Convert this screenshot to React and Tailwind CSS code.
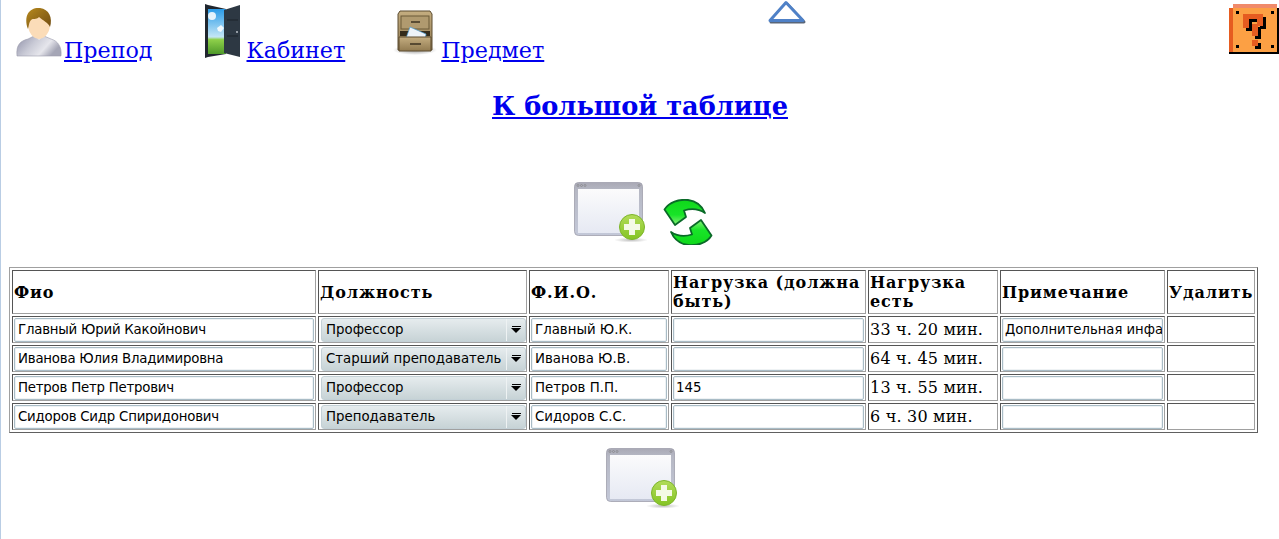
const serif = { fontFamily: '"DejaVu Serif", serif' };
const sans = { fontFamily: '"DejaVu Sans", sans-serif' };

const rows = [
  { name: "Главный Юрий Какойнович", post: "Профессор", short: "Главный Ю.К.", load: "", real: "33 ч. 20 мин.", note: "Дополнительная инфа" },
  { name: "Иванова Юлия Владимировна", post: "Старший преподаватель", short: "Иванова Ю.В.", load: "", real: "64 ч. 45 мин.", note: "" },
  { name: "Петров Петр Петрович", post: "Профессор", short: "Петров П.П.", load: "145", real: "13 ч. 55 мин.", note: "" },
  { name: "Сидоров Сидр Спиридонович", post: "Преподаватель", short: "Сидоров С.С.", load: "", real: "6 ч. 30 мин.", note: "" },
];

const heads = [
  ["Фио", "w-[304px]"],
  ["Должность", "w-[209px]"],
  ["Ф.И.О.", "w-[140px]"],
  ["Нагрузка (должна быть)", "w-[195px]"],
  ["Нагрузка есть", "w-[130px]"],
  ["Примечание", "w-[165px]"],
  ["Удалить", "w-[88px]"],
];

function PersonIcon() {
  return (
    <svg width="46" height="52" viewBox="0 0 46 52" className="shrink-0">
      <defs>
        <linearGradient id="shirt" x1="0" y1="0" x2="1" y2="0.4">
          <stop offset="0" stopColor="#8f90a8" />
          <stop offset="0.45" stopColor="#c9cad6" />
          <stop offset="0.75" stopColor="#e6e6ec" />
          <stop offset="1" stopColor="#a5a6b6" />
        </linearGradient>
        <linearGradient id="hair" x1="0" y1="0" x2="1" y2="1">
          <stop offset="0" stopColor="#b88a1e" />
          <stop offset="1" stopColor="#6e4a12" />
        </linearGradient>
      </defs>
      <path d="M1 49 C0 38 4 34 12 32 L18 29 L28 29 L35 32 C42 34 46 40 45 49 Z" fill="url(#shirt)" stroke="#9a9bab" strokeWidth="0.6" />
      <path d="M19 28 L23 33 L28 28 L27 25 L19 25 Z" fill="#f6efe8" />
      <ellipse cx="23" cy="17" rx="11" ry="15" fill="#fbdcb8" />
      <path d="M12 22 C7 8 14 0 24 1 C33 2 37 11 34 20 C32 15 27 14 23 10 C20 13 17 11 15 13 C13 15 13 18 12 22 Z" fill="url(#hair)" />
    </svg>
  );
}

function DoorIcon() {
  return (
    <svg width="37" height="54" viewBox="0 0 37 54" className="shrink-0">
      <defs>
        <linearGradient id="sky" x1="0" y1="0" x2="0" y2="1">
          <stop offset="0" stopColor="#2a9be8" />
          <stop offset="0.62" stopColor="#c4e6f6" />
          <stop offset="0.68" stopColor="#8ed04a" />
          <stop offset="1" stopColor="#4f9a2a" />
        </linearGradient>
      </defs>
      <path d="M0 0 L3 1 L21 5 L21 50 L3 53 L0 54 Z" fill="#20262e" />
      <rect x="3" y="5" width="18" height="45" fill="url(#sky)" />
      <circle cx="7" cy="12" r="4" fill="#ffffff" opacity="0.85" />
      <path d="M12 24 l4 -3 l3 3 l-3 4 l-3 -1 Z" fill="#ffffff" opacity="0.85" />
      <path d="M19 6 L35 1 L35 53 L19 49 Z" fill="#2d3843" />
      <path d="M22 16 H33 M22 32 H33" stroke="#1c232b" strokeWidth="1" />
      <circle cx="32" cy="28" r="0.9" fill="#c7ccd2" />
    </svg>
  );
}

function CabinetIcon() {
  return (
    <svg width="44" height="46" viewBox="0 0 44 46" className="shrink-0">
      <defs>
        <linearGradient id="wood" x1="0" y1="0" x2="0" y2="1">
          <stop offset="0" stopColor="#c4ad80" />
          <stop offset="1" stopColor="#917a50" />
        </linearGradient>
        <radialGradient id="floor">
          <stop offset="0" stopColor="#555" stopOpacity="0.6" />
          <stop offset="1" stopColor="#555" stopOpacity="0" />
        </radialGradient>
      </defs>
      <ellipse cx="22" cy="40" rx="22" ry="5" fill="url(#floor)" />
      <path d="M7 1 H37 L39 4 V40 H5 V4 Z" fill="url(#wood)" stroke="#5d4d30" />
      <rect x="8" y="6" width="28" height="13" fill="#b09a6f" stroke="#6b5a38" />
      <path d="M18 12 H27" stroke="#3c3220" strokeWidth="1.5" />
      <path d="M7 21 H37 V26 H7 Z" fill="#352c1b" />
      <path d="M12 31 L17 17 L33 24 L32 31 Z" fill="#eef3f8" stroke="#4b9bd0" strokeWidth="0.7" />
      <path d="M6 27 H38 V41 H6 Z" fill="url(#wood)" stroke="#5d4d30" />
      <path d="M17 34 H28" stroke="#3c3220" strokeWidth="1.5" />
    </svg>
  );
}

function TriangleIcon() {
  return (
    <svg width="42" height="26" viewBox="0 0 42 26" className="ml-[222px] shrink-0">
      <path d="M20 2.500 L37 20.500 H4 Z" fill="none" stroke="#2f4058" strokeWidth="3" strokeLinejoin="round" opacity="0.8" transform="translate(1 1.500)" />
      <path d="M20 2.500 L37 20.500 H4 Z" fill="#fff" stroke="#4f81c7" strokeWidth="3" strokeLinejoin="round" />
    </svg>
  );
}

function QuestionIcon() {
  const mark = "M14 10 H34 V22 H29 V32 H23 V20 H28 V15 H20 V24 H14 Z";
  return (
    <svg width="50" height="50" viewBox="0 0 50 50" shapeRendering="crispEdges" className="ml-auto mt-[4px] shrink-0">
      <rect x="4" y="0" width="44" height="4" fill="#f08a6a" />
      <rect x="0" y="4" width="50" height="46" fill="#000" />
      <rect x="0" y="4" width="4" height="44" fill="#e65c20" />
      <rect x="4" y="4" width="44" height="44" fill="#fca044" />
      <rect x="7" y="7" width="3" height="3" fill="#000" />
      <rect x="42" y="7" width="3" height="3" fill="#000" />
      <rect x="7" y="41" width="3" height="3" fill="#000" />
      <rect x="42" y="41" width="3" height="3" fill="#000" />
      <path d={mark} fill="#000" transform="translate(3 3)" />
      <path d={mark} fill="#e65c20" />
      <rect x="26" y="39" width="6" height="6" fill="#000" />
      <rect x="23" y="36" width="6" height="6" fill="#e65c20" />
    </svg>
  );
}

function AddWindowIcon({ id, className = "" }) {
  return (
    <svg width="76" height="62" viewBox="0 0 76 62" className={`shrink-0 ${className}`}>
      <defs>
        <linearGradient id={`frame${id}`} x1="0" y1="0" x2="0" y2="1">
          <stop offset="0" stopColor="#a9a9b5" />
          <stop offset="0.15" stopColor="#b6b8c4" />
          <stop offset="1" stopColor="#c3c8d8" />
        </linearGradient>
        <linearGradient id={`pane${id}`} x1="0" y1="0" x2="0" y2="1">
          <stop offset="0" stopColor="#fbfbfc" />
          <stop offset="1" stopColor="#e6e9f3" />
        </linearGradient>
        <linearGradient id={`ball${id}`} x1="0" y1="0" x2="0" y2="1">
          <stop offset="0" stopColor="#b2dc5a" />
          <stop offset="1" stopColor="#84c424" />
        </linearGradient>
        <radialGradient id={`shade${id}`}>
          <stop offset="0" stopColor="#888" stopOpacity="0.55" />
          <stop offset="1" stopColor="#888" stopOpacity="0" />
        </radialGradient>
      </defs>
      <ellipse cx="58" cy="59" rx="17" ry="2.500" fill={`url(#shade${id})`} />
      <rect x="1.500" y="1.500" width="68" height="53" rx="4" fill={`url(#frame${id})`} stroke="#a0a0ac" strokeWidth="0.8" />
      <rect x="5" y="8" width="61" height="44" fill={`url(#pane${id})`} />
      <circle cx="5" cy="4.500" r="1" fill="none" stroke="#777" strokeWidth="0.5" />
      <circle cx="8.500" cy="4.500" r="1" fill="none" stroke="#777" strokeWidth="0.5" />
      <circle cx="12" cy="4.500" r="1" fill="none" stroke="#777" strokeWidth="0.5" />
      <circle cx="66" cy="4.500" r="1" fill="none" stroke="#777" strokeWidth="0.5" />
      <circle cx="59" cy="46" r="12.500" fill={`url(#ball${id})`} stroke="#7db52a" strokeWidth="1" />
      <path d="M56 38 H62 V43 H67 V49 H62 V54 H56 V49 H51 V43 H56 Z" fill="#f4fae6" />
    </svg>
  );
}

function RefreshIcon() {
  const arc = "M1.500 10.500 C6 3 16 0 25 1 C33 2 39 7 42 14 C36 10 29 9 21 11.500 L23 18 L12 26 Z";
  return (
    <svg width="50" height="46" viewBox="0 0 50 46" className="shrink-0">
      <defs>
        <linearGradient id="arrow" x1="0" y1="0" x2="0" y2="1">
          <stop offset="0" stopColor="#0fd81a" />
          <stop offset="0.6" stopColor="#18e428" />
          <stop offset="1" stopColor="#8af27a" />
        </linearGradient>
      </defs>
      <path d={arc} fill="url(#arrow)" stroke="#0a6a28" strokeWidth="1.800" strokeLinejoin="round" />
      <path d={arc} fill="url(#arrow)" stroke="#0a6a28" strokeWidth="1.800" strokeLinejoin="round" transform="rotate(180 25 23.500)" />
    </svg>
  );
}

function Field({ value, className = "text-[13.33px] pl-[3px]" }) {
  return (
    <div className={`h-[24px] w-full overflow-hidden whitespace-nowrap rounded-[2px] border border-[#a9bcc6] bg-white leading-[22px] text-black shadow-[inset_0_0_0_1px_#eef2f4] ${className}`} style={sans}>
      {value}
    </div>
  );
}

function SelectBox({ value }) {
  return (
    <div className="ml-[1px] flex h-[24px] w-[205px] items-stretch overflow-hidden rounded-[3px] border border-[#c3d0d6] bg-gradient-to-b from-[#e6ecee] to-[#c7d3d6] text-[13.33px] leading-[22px] text-black" style={sans}>
      <span className="flex-1 overflow-hidden whitespace-nowrap pl-[4px]">{value}</span>
      <span className="flex w-[19px] flex-col items-center justify-center border-l border-[#eef2f3]">
        <span className="mb-[1px] h-[1px] w-[9px] bg-black" />
        <span className="h-0 w-0 border-x-[5px] border-t-[5px] border-x-transparent border-t-black" />
      </span>
    </div>
  );
}

const cell = "border border-t-[#555555] border-l-[#555555] border-r-[#a0a0a0] border-b-[#a0a0a0] p-0";

export default function App() {
  return (
    <div className="h-[539px] overflow-hidden border-l border-[#b9cde4] bg-white text-black" style={serif}>
      <div className="flex h-[63px] items-start">
        <a href="#" className="ml-[15px] mt-[7px] flex items-end text-[22.2px] leading-[28px] text-[#0000ee] underline">
          <PersonIcon />
          <span className="mb-[-5px] ml-[2px]">Препод</span>
        </a>
        <a href="#" className="ml-[52px] mt-[4px] flex items-end text-[22.2px] leading-[28px] text-[#0000ee] underline">
          <DoorIcon />
          <span className="mb-[-6px] ml-[5px]">Кабинет</span>
        </a>
        <a href="#" className="ml-[48px] mt-[10px] flex items-end text-[22.2px] leading-[28px] text-[#0000ee] underline">
          <CabinetIcon />
          <span className="mb-[-8px] ml-[4px]">Предмет</span>
        </a>
        <TriangleIcon />
        <QuestionIcon />
      </div>
      <h2 className="mt-[27px] text-center text-[25.6px] font-bold leading-[32px]">
        <a href="#" className="text-[#0000ee] underline">К большой таблице</a>
      </h2>
      <div className="ml-[6px] mt-[59px] flex items-end justify-center gap-[14px]">
        <AddWindowIcon id="a" className="mb-[2px]" />
        <RefreshIcon />
      </div>
      <table className="ml-[8px] mt-[22px] w-[1249px] table-fixed border-separate border-spacing-[2px] border border-t-[#a0a0a0] border-l-[#a0a0a0] border-r-[#606060] border-b-[#606060] text-[16px]">
        <thead>
          <tr>
            {heads.map(([title, width]) => (
              <th key={title} className={`${cell} ${width} h-[44px] px-[1px] text-left align-middle text-[16px] font-bold leading-[19px] tracking-[0.9px]`}>{title}</th>
            ))}
          </tr>
        </thead>
        <tbody>
          {rows.map((row) => (
            <tr key={row.name}>
              <td className={`${cell} h-[27px] px-[1px]`}><Field value={row.name} className="pl-[3px] text-[13.33px] tracking-[-0.22px]" /></td>
              <td className={`${cell} px-[1px]`}><SelectBox value={row.post} /></td>
              <td className={`${cell} px-[1px]`}><Field value={row.short} /></td>
              <td className={`${cell} px-[1px]`}><Field value={row.load} className="pl-[2px] text-[13.33px]" /></td>
              <td className={`${cell} whitespace-nowrap px-[1px] text-[16px] tracking-[0.2px]`}>{row.real}</td>
              <td className={`${cell} px-[1px]`}><Field value={row.note} className="pl-[2px] text-[13.2px]" /></td>
              <td className={cell} />
            </tr>
          ))}
        </tbody>
      </table>
      <div className="ml-[6px] mt-[14px] flex justify-center">
        <AddWindowIcon id="b" />
      </div>
    </div>
  );
}
